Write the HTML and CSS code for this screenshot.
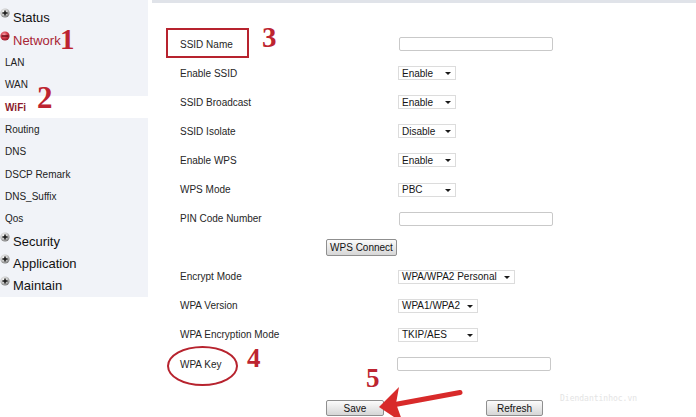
FILE: index.html
```html
<!DOCTYPE html>
<html lang="en">
<head>
<meta charset="utf-8">
<title>WiFi Settings</title>
<link rel="stylesheet" href="styles.css">
</head>
<body>
<div class="page">
  <nav class="sidebar">
    <div class="nav-head">
      <svg class="node" viewBox="0 0 10 10"><defs><radialGradient id="gp" cx="40%" cy="35%" r="70%"><stop offset="0" stop-color="#ffffff"/><stop offset=".55" stop-color="#c4c4c4"/><stop offset="1" stop-color="#6e6e6e"/></radialGradient></defs><circle cx="5" cy="5" r="4.6" fill="url(#gp)"/><path d="M2.4 5h5.2M5 2.4v5.2" stroke="#151515" stroke-width="1.5"/></svg>
      <span>Status</span>
    </div>
    <div class="nav-head open">
      <svg class="node" viewBox="0 0 10 10"><defs><radialGradient id="gm" cx="40%" cy="35%" r="70%"><stop offset="0" stop-color="#f7a0a8"/><stop offset=".5" stop-color="#d23a4a"/><stop offset="1" stop-color="#8e1424"/></radialGradient></defs><circle cx="5" cy="5" r="4.6" fill="url(#gm)"/><path d="M1.6 5h6.8" stroke="#6a0c18" stroke-width="1.5"/></svg>
      <span>Network</span>
    </div>
    <div class="nav-sub">LAN</div>
    <div class="nav-sub">WAN</div>
    <div class="nav-sub active">WiFi</div>
    <div class="nav-sub">Routing</div>
    <div class="nav-sub">DNS</div>
    <div class="nav-sub">DSCP Remark</div>
    <div class="nav-sub">DNS_Suffix</div>
    <div class="nav-sub">Qos</div>
    <div class="nav-head">
      <svg class="node" viewBox="0 0 10 10"><circle cx="5" cy="5" r="4.6" fill="url(#gp)"/><path d="M2.4 5h5.2M5 2.4v5.2" stroke="#151515" stroke-width="1.5"/></svg>
      <span>Security</span>
    </div>
    <div class="nav-head">
      <svg class="node" viewBox="0 0 10 10"><circle cx="5" cy="5" r="4.6" fill="url(#gp)"/><path d="M2.4 5h5.2M5 2.4v5.2" stroke="#151515" stroke-width="1.5"/></svg>
      <span>Application</span>
    </div>
    <div class="nav-head">
      <svg class="node" viewBox="0 0 10 10"><circle cx="5" cy="5" r="4.6" fill="url(#gp)"/><path d="M2.4 5h5.2M5 2.4v5.2" stroke="#151515" stroke-width="1.5"/></svg>
      <span>Maintain</span>
    </div>
  </nav>

  <main class="main">
    <div class="form">
      <div class="row"><span class="label">SSID Name</span><input class="text" type="text"></div>
      <div class="row"><span class="label">Enable SSID</span><span class="select w-short">Enable<i class="caret"></i></span></div>
      <div class="row"><span class="label">SSID Broadcast</span><span class="select w-short">Enable<i class="caret"></i></span></div>
      <div class="row"><span class="label">SSID Isolate</span><span class="select w-short">Disable<i class="caret"></i></span></div>
      <div class="row"><span class="label">Enable WPS</span><span class="select w-short">Enable<i class="caret"></i></span></div>
      <div class="row"><span class="label">WPS Mode</span><span class="select w-short">PBC<i class="caret"></i></span></div>
      <div class="row"><span class="label">PIN Code Number</span><input class="text" type="text"></div>
      <div class="row row-btn"><button class="btn btn-wps" type="button">WPS Connect</button></div>
      <div class="row"><span class="label">Encrypt Mode</span><span class="select w-long">WPA/WPA2 Personal<i class="caret"></i></span></div>
      <div class="row"><span class="label">WPA Version</span><span class="select w-mid">WPA1/WPA2<i class="caret"></i></span></div>
      <div class="row"><span class="label">WPA Encryption Mode</span><span class="select w-mid">TKIP/AES<i class="caret"></i></span></div>
      <div class="row"><span class="label">WPA Key</span><input class="text key" type="text"></div>
      <div class="actions">
        <button class="btn btn-save" type="button">Save</button>
        <button class="btn btn-refresh" type="button">Refresh</button>
      </div>
    </div>
  </main>

  <!-- hand-drawn callouts on top of the page -->
  <span class="mark m1">1</span>
  <span class="mark m2">2</span>
  <span class="mark m3">3</span>
  <span class="mark m4">4</span>
  <span class="mark m5">5</span>
  <span class="callout-box"></span>
  <span class="callout-ring"></span>
  <svg class="callout-arrow" viewBox="0 0 100 40" width="100" height="40">
    <path d="M25 24.5 L90 12.5" stroke="#d82a2a" stroke-width="5" stroke-linecap="round"/>
    <path d="M9 27 L29 7 L26 23.5 L33 43 Z" fill="#d82a2a"/>
  </svg>
  <span class="watermark">Diendantinhoc.vn</span>
</div>
</body>
</html>
```

FILE: styles.css
```css
* {
  box-sizing: border-box;
}

html, body {
  margin: 0;
  padding: 0;
  background: #ffffff;
}

body {
  font-family: "Liberation Sans", Arial, sans-serif;
  color: #222;
}

.page {
  position: relative;
  display: flex;
  align-items: flex-start;
  width: 696px;
  height: 417px;
  overflow: hidden;
}

/* ---------- left navigation ---------- */
.sidebar {
  width: 148px;
  flex: none;
  background: #f1f3f8;
  padding-top: 6.8px;
}

.nav-head,
.nav-sub {
  display: flex;
  align-items: center;
  height: 22.33px;
}

.nav-head {
  font-size: 13px;
  color: #111;
}

.nav-head .node {
  width: 10px;
  height: 10px;
  flex: none;
  align-self: flex-start;
  margin-top: 1.5px;
  margin-right: 3px;
}

.nav-head.open {
  color: #a82535;
}

.nav-sub {
  font-size: 10px;
  padding-left: 5px;
  color: #222;
}

.nav-sub.active {
  background: #ffffff;
  color: #8c1a2b;
  font-weight: bold;
}

/* ---------- settings form ---------- */
.main {
  flex: 1;
  margin-left: 4px;
  border-top: 3px solid #e0e3e9;
  height: 100%;
}

.form {
  padding: 26.5px 0 0 28px;
}

.row {
  display: flex;
  align-items: center;
  height: 29.1px;
}

.label {
  width: 218px;
  flex: none;
  font-size: 10px;
  color: #262626;
}

.text {
  width: 154px;
  height: 14px;
  margin: 0 0 0 1px;
  padding: 0 2px;
  border: 1px solid #c9c9c9;
  border-radius: 2px;
  background: #fff;
  font: 10px "Liberation Sans", Arial, sans-serif;
}

.text.key {
  margin-left: -1px;
}

.select {
  position: relative;
  display: flex;
  align-items: center;
  height: 14px;
  padding-left: 3px;
  border: 1px solid #dcdcdc;
  background: #fff;
  font-size: 10px;
  color: #151515;
}

.w-short { width: 58px; }
.w-mid { width: 80px; }
.w-long { width: 117px; }

.caret {
  position: absolute;
  right: 4px;
  top: 5px;
  width: 0;
  height: 0;
  border-left: 3px solid transparent;
  border-right: 3px solid transparent;
  border-top: 3px solid #1a1a1a;
}

.btn {
  height: 17px;
  padding: 0;
  border: 1px solid #8f8f8f;
  border-radius: 2px;
  background: linear-gradient(#fbfbfb, #e9e9e9 50%, #d6d6d6);
  font: 10px "Liberation Sans", Arial, sans-serif;
  color: #111;
}

.row-btn {
  padding-left: 146px;
}

.btn-wps { width: 71px; }

.actions {
  display: flex;
  margin-top: 21.4px;
  padding-left: 146px;
}

.btn-save {
  width: 58px;
  height: 16px;
}

.btn-refresh {
  width: 57px;
  height: 16px;
  margin-left: 102px;
}

/* ---------- callouts ---------- */
.mark {
  position: absolute;
  font: bold 29px/29px "Liberation Serif", "Times New Roman", serif;
  color: #bd2430;
}

.m1 { left: 60px; top: 25px; }
.m2 { left: 37px; top: 83px; font-size: 31px; }
.m3 { left: 262px; top: 23px; }
.m4 { left: 247px; top: 345px; font-size: 27px; line-height: 27px; }
.m5 { left: 366px; top: 365px; font-size: 27px; line-height: 27px; }

.callout-box {
  position: absolute;
  left: 166px;
  top: 28px;
  width: 83px;
  height: 30px;
  border: 2px solid #b7232e;
}

.callout-ring {
  position: absolute;
  left: 167px;
  top: 346px;
  width: 71px;
  height: 40px;
  border: 2px solid #b7232e;
  border-radius: 50%;
}

.callout-arrow {
  position: absolute;
  left: 370px;
  top: 380px;
}

.watermark {
  position: absolute;
  left: 560px;
  top: 394px;
  font: 8px "DejaVu Sans Mono", monospace;
  color: #e4e4e4;
}
```
